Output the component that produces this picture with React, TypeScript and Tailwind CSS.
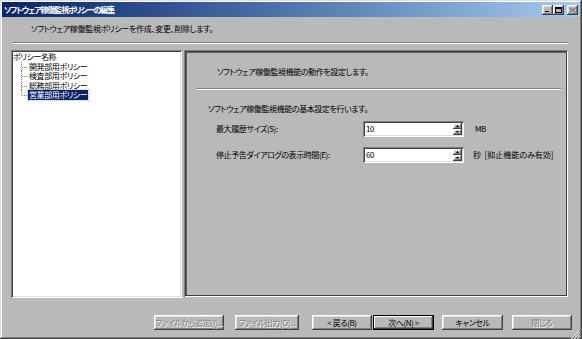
import React from 'react'

const raised =
  'shadow-[inset_-1px_-1px_#404040,inset_1px_1px_#ffffff,inset_-2px_-2px_#808080,inset_2px_2px_#dfdfdf]'
const sunken =
  'shadow-[inset_1px_1px_#808080,inset_-1px_-1px_#ffffff,inset_2px_2px_#404040,inset_-2px_-2px_#dfdfdf]'

const POLICIES = ['開発部用ポリシー', '検査部用ポリシー', '総務部用ポリシー', '営業部用ポリシー']

function TreeLine({ last }: { last: boolean }) {
  return (
    <svg width="14" height="9.5" viewBox="0 0 14 9.5" className="shrink-0">
      <line x1="7.5" y1="0" x2="7.5" y2={last ? 5 : 9.5} stroke="#808080" strokeWidth="1" strokeDasharray="1 1" />
      <line x1="8" y1="5.5" x2="13" y2="5.5" stroke="#808080" strokeWidth="1" strokeDasharray="1 1" />
    </svg>
  )
}

function Spin({ value }: { value: string }) {
  return (
    <div className={`w-[101px] h-[16px] bg-white flex ${sunken} p-[2px]`}>
      <div className="flex-1 leading-[12px] pl-[1px]">{value}</div>
      <div className="w-[9px] flex flex-col">
        <div className={`flex-1 bg-[#b9b9b9] ${raised} flex items-center justify-center`}>
          <svg width="3" height="2" viewBox="0 0 3 2"><path d="M1.5 0L3 2H0z" fill="#000" /></svg>
        </div>
        <div className={`flex-1 bg-[#b9b9b9] ${raised} flex items-center justify-center`}>
          <svg width="3" height="2" viewBox="0 0 3 2"><path d="M0 0H3L1.5 2z" fill="#000" /></svg>
        </div>
      </div>
    </div>
  )
}

function Btn({ label, w, disabled, primary, cls }: { label: string; w: string; disabled?: boolean; primary?: boolean; cls?: string }) {
  return (
    <div
      className={`${w} h-[15px] flex items-center justify-center bg-[#b9b9b9] whitespace-nowrap leading-none ${
        primary ? 'border border-black shadow-[inset_-1px_-1px_#404040,inset_1px_1px_#ffffff,inset_-2px_-2px_#808080]' : raised
      } ${disabled ? 'text-[#808080] [text-shadow:1px_1px_0_#ffffff]' : 'text-black'} ${cls ?? ''}`}
    >
      {label}
    </div>
  )
}

function TitleBtn({ children, cls }: { children: React.ReactNode; cls?: string }) {
  return (
    <div className={`w-[11px] h-[10px] bg-[#b9b9b9] ${raised} flex items-center justify-center ${cls ?? ''}`}>
      {children}
    </div>
  )
}

export default function App() {
  return (
    <div
      className={`w-[582px] h-[339px] bg-[#b9b9b9] flex flex-col p-[2px] font-['Noto_Sans_CJK_JP',sans-serif] [font-feature-settings:'palt'] text-[8px] tracking-[-0.4px] text-black shadow-[inset_-1px_-1px_#404040,inset_1px_1px_#dfdfdf,inset_-2px_-2px_#808080,inset_2px_2px_#ffffff]`}
    >
      {/* title bar */}
      <div className="h-[15px] shrink-0 flex items-center pl-[2px] pr-[2px] bg-gradient-to-r from-[#0a246a] to-[#a6caf0]">
        <span className="text-white font-bold text-[8px] tracking-[-1.1px] leading-none flex-1">ソフトウェア稼働監視ポリシーの編集</span>
        <TitleBtn>
          <div className="w-[4px] h-[1.5px] bg-black mt-[4px] -ml-[1px]" />
        </TitleBtn>
        <TitleBtn>
          <div className="w-[7px] h-[6px] border border-black border-t-2" />
        </TitleBtn>
        <TitleBtn cls="ml-[3px]">
          <svg width="7" height="6" viewBox="0 0 7 6">
            <path d="M0.5 0.5L6.5 5.5M6.5 0.5L0.5 5.5" stroke="#808080" strokeWidth="1.3" />
          </svg>
        </TitleBtn>
      </div>

      {/* header */}
      <div className="pl-[29px] pt-[6px] h-[18px] leading-[12px] tracking-[-0.3px] shrink-0">
        ソフトウェア稼働監視ポリシーを作成、変更、削除します。
      </div>
      <div className="mt-[7px] ml-[11px] mr-[12px] h-[2px] border-t border-[#808080] border-b border-b-white shrink-0" />

      {/* main */}
      <div className="mt-[6px] h-[248px] flex shrink-0">
        <div className={`ml-[9px] w-[171px] bg-white ${sunken} p-[2px]`}>
          <div className="h-[9.5px] leading-[9.5px] whitespace-nowrap">ポリシー名称</div>
          {POLICIES.map((p, i) => (
            <div key={p} className="h-[9.5px] flex items-stretch pl-[1px]">
              <TreeLine last={i === POLICIES.length - 1} />
              <span
                className={`h-[9.5px] leading-[9.5px] whitespace-nowrap px-[1px] ${
                  i === POLICIES.length - 1 ? 'bg-[#0a246a] text-white outline outline-1 outline-dotted outline-[#c0c0c0]' : ''
                }`}
              >
                {p}
              </span>
            </div>
          ))}
        </div>

        <div
          className="ml-[2px] mr-[12px] flex-1 h-[247px] shadow-[inset_1px_1px_#808080,inset_-1px_-1px_#ffffff,inset_2px_2px_#404040,inset_-2px_-2px_#404040,inset_3px_3px_#606060] flex flex-col"
        >
          <div className="pl-[33px] pt-[16px] leading-[12px]">ソフトウェア稼働監視機能の動作を設定します。</div>
          <div className="mt-[10px] ml-[13px] mr-[7px] h-[2px] border-t border-[#808080] border-b border-b-white" />
          <div className="pl-[24px] mt-[13px] leading-[12px]">ソフトウェア稼働監視機能の基本設定を行います。</div>
          <div className="mt-[6px] pl-[32px] flex items-center">
            <div className="w-[147px] leading-[12px]">最大履歴サイズ(S):</div>
            <Spin value="10" />
            <div className="ml-[11px] leading-[12px]">MB</div>
          </div>
          <div className="mt-[10px] pl-[32px] flex items-center">
            <div className="w-[147px] leading-[12px]">停止予告ダイアログの表示時間(E):</div>
            <Spin value="60" />
            <div className="ml-[9px] leading-[12px] tracking-[0px] whitespace-pre">秒  [抑止機能のみ有効]</div>
          </div>
        </div>
      </div>

      {/* buttons */}
      <div className="mt-[17px] flex pl-[152px] shrink-0">
        <Btn label="ファイルから追加(I)..." w="w-[70px]" disabled />
        <Btn label="ファイル出力(O)..." w="w-[64px]" disabled cls="ml-[11px]" />
        <Btn label="< 戻る(B)" w="w-[60px]" cls="ml-[13px]" />
        <Btn label="次へ(N) >" w="w-[61px]" primary cls="ml-[1px]" />
        <Btn label="キャンセル" w="w-[61px]" cls="ml-[8px]" />
        <Btn label="閉じる" w="w-[60px]" disabled cls="ml-[9px]" />
      </div>
      <div className="flex-1 flex justify-end items-end">
        <svg width="10" height="10" viewBox="0 0 10 10">
          <path d="M9 1L1 9M9 4L4 9M9 7L7 9" stroke="#ffffff" strokeWidth="1" />
          <path d="M10 1L1 10M10 4L4 10M10 7L7 10" stroke="#808080" strokeWidth="1" />
        </svg>
      </div>
    </div>
  )
}
